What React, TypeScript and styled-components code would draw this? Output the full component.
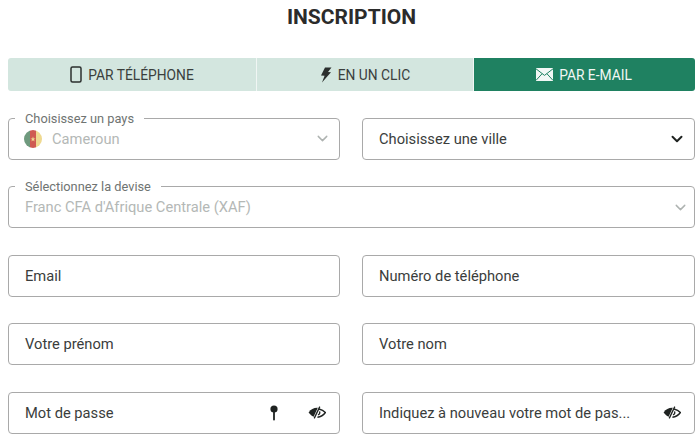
import styled, { createGlobalStyle } from "styled-components";
import { ChevronDown } from "lucide-react";

const GlobalStyle = createGlobalStyle`
    html, body {
        margin: 0;
        background: #fff;
        font-family: Roboto, "Liberation Sans", sans-serif;
    }
`;

function PhoneIcon() {
    return (
        <svg width="12" height="17" viewBox="0 0 12 17" fill="none">
            <rect x="1" y="1" width="10" height="15" rx="1.5" stroke="#2b2f2e" strokeWidth="1.5" />
        </svg>
    );
}

function BoltIcon() {
    return (
        <svg width="12" height="16" viewBox="0 0 12 16">
            <path d="M5 0.5 L11.5 0.5 L8 5 L11 5.2 L2 15.5 L4.6 8.8 L1 8.6 Z" fill="#2b2f2e" />
        </svg>
    );
}

function MailIcon() {
    return (
        <svg width="17" height="13" viewBox="0 0 17 13">
            <rect width="17" height="13" fill="#f2f7f5" />
            <path d="M0 0.8 L8.5 7.4 L17 0.8 M0 12.4 L6 5.8 M17 12.4 L11 5.8" fill="none" stroke="#1f8161" strokeWidth="1" />
        </svg>
    );
}

function KeyIcon() {
    return (
        <svg width="8" height="16" viewBox="0 0 8 16">
            <circle cx="4" cy="4" r="3.6" fill="#1f2321" />
            <rect x="3.1" y="5" width="1.8" height="10.6" rx="0.8" fill="#1f2321" />
        </svg>
    );
}

function EyeOffIcon() {
    return (
        <svg width="18" height="13" viewBox="0 0 18 13">
            <path d="M0.6 6.5 C3 3 6 1.6 9.8 1.8 L5.6 10.8 C3.6 10 2 8.4 0.6 6.5 Z" fill="#1f2321" />
            <path d="M11 3 C13.6 3.6 15.8 4.8 17.4 6.5 C15.6 9 13 10.8 9.4 11.2" fill="none" stroke="#1f2321" strokeWidth="1.4" />
            <path d="M11.8 0.6 L6.2 12.4" stroke="#1f2321" strokeWidth="1.3" />
            <path d="M11.6 5.4 C12.2 7 11.4 8.4 10 9" fill="none" stroke="#1f2321" strokeWidth="1.2" />
        </svg>
    );
}

function CameroonFlag() {
    return (
        <svg width="18" height="18" viewBox="0 0 18 18">
            <defs>
                <clipPath id="flag-circle">
                    <circle cx="9" cy="9" r="9" />
                </clipPath>
            </defs>
            <g clipPath="url(#flag-circle)">
                <rect width="6" height="18" fill="#6f9a7e" />
                <rect x="6" width="6" height="18" fill="#cf5a52" />
                <rect x="12" width="6" height="18" fill="#efd990" />
                <path d="M9 6.6 L9.7 8.4 L11.5 8.4 L10 9.6 L10.6 11.4 L9 10.3 L7.4 11.4 L8 9.6 L6.5 8.4 L8.3 8.4 Z" fill="#efd990" />
            </g>
        </svg>
    );
}

export default function App() {
    return (
        <Page>
            <GlobalStyle />
            <Title>INSCRIPTION</Title>
            <Tabs>
                <Tab>
                    <PhoneIcon />
                    PAR TÉLÉPHONE
                </Tab>
                <Tab>
                    <BoltIcon />
                    EN UN CLIC
                </Tab>
                <Tab $active>
                    <MailIcon />
                    PAR E-MAIL
                </Tab>
            </Tabs>
            <Form>
                <LegendField>
                    <FieldLegend>Choisissez un pays</FieldLegend>
                    <FlagSlot>
                        <CameroonFlag />
                    </FlagSlot>
                    <MutedValue>Cameroun</MutedValue>
                    <Chevron size={17} color="#aeb3b1" />
                </LegendField>
                <Field>
                    <Value>Choisissez une ville</Value>
                    <Chevron size={18} color="#1f2321" strokeWidth={2.6} />
                </Field>
                <WideLegendField>
                    <FieldLegend>Sélectionnez la devise</FieldLegend>
                    <MutedValue>Franc CFA d'Afrique Centrale (XAF)</MutedValue>
                    <Chevron size={17} color="#aeb3b1" />
                </WideLegendField>
                <Field>
                    <Value>Email</Value>
                </Field>
                <Field>
                    <Value>Numéro de téléphone</Value>
                </Field>
                <Field>
                    <Value>Votre prénom</Value>
                </Field>
                <Field>
                    <Value>Votre nom</Value>
                </Field>
                <Field>
                    <Value>Mot de passe</Value>
                    <KeySlot>
                        <KeyIcon />
                    </KeySlot>
                    <EyeOffIcon />
                </Field>
                <Field>
                    <Value>Indiquez à nouveau votre mot de pas...</Value>
                    <EyeOffIcon />
                </Field>
            </Form>
        </Page>
    );
}

const Page = styled.div`
    width: 700px;
    height: 440px;
    box-sizing: border-box;
    padding: 5px 5px 0 8px;
    overflow: hidden;
    color: #2b2f2e;
`;

const Title = styled.h1`
    margin: 0;
    height: 24px;
    line-height: 24px;
    text-align: center;
    font-size: 21px;
    font-weight: 700;
    color: #2b2b2b;
`;

const Tabs = styled.div`
    display: grid;
    grid-template-columns: 249px 217px 221px;
    height: 33px;
    margin-top: 29px;
    border-radius: 3px;
    overflow: hidden;
`;

const Tab = styled.div<{ $active?: boolean }>`
    display: flex;
    align-items: center;
    justify-content: center;
    gap: 6px;
    font-size: 13.8px;
    color: ${({ $active }) => ($active ? "#f2f7f5" : "#3a3f3d")};
    background: ${({ $active }) => ($active ? "#1f8161" : "#d3e6df")};
    border-right: 1px solid ${({ $active }) => ($active ? "transparent" : "#f0f6f4")};
`;

const Form = styled.div`
    display: grid;
    grid-template-columns: 332px 333px;
    grid-auto-rows: 42px;
    column-gap: 22px;
    row-gap: 26.5px;
    margin-top: 26.6px;
`;

const Field = styled.div`
    display: flex;
    align-items: center;
    box-sizing: border-box;
    padding: 0 13px 0 16px;
    border: 1px solid #a9a9a9;
    border-radius: 4px;
    background: #fff;
`;

const LegendField = styled.fieldset`
    display: flex;
    align-items: center;
    min-width: 0;
    margin: 0;
    box-sizing: border-box;
    padding: 0 13px 0 16px;
    height: 42px;
    border: 1px solid #a9a9a9;
    border-radius: 4px;
`;

const WideLegendField = styled(LegendField)`
    grid-column: 1 / -1;
    padding-right: 10px;
`;

const FieldLegend = styled.legend`
    margin-left: -10px;
    padding: 0 10px;
    height: 1px;
    line-height: 1px;
    font-size: 12.8px;
    color: #6f7472;
`;

const Value = styled.span`
    flex: 1;
    font-size: 14.7px;
    color: #3a3d3c;
    white-space: nowrap;
`;

const MutedValue = styled(Value)`
    color: #b4b8b6;
`;

const Chevron = styled(ChevronDown)`
    flex: none;
    margin-right: -5px;
`;

const FlagSlot = styled.span`
    display: flex;
    flex: none;
    margin-right: 10px;
    margin-left: -1px;
`;

const KeySlot = styled.span`
    display: flex;
    margin-right: 30px;
`;
